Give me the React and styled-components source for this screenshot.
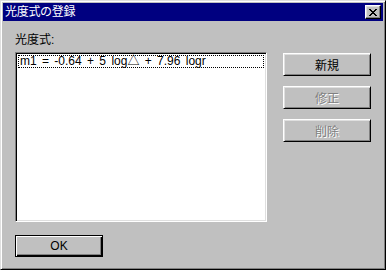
import styled, { createGlobalStyle } from "styled-components";

const GlobalStyle = createGlobalStyle`
  html, body {
    margin: 0;
    padding: 0;
    background: #c0c0c0;
  }
  * {
    box-sizing: border-box;
  }
`;

const jpFont = `"Liberation Sans", "Noto Sans CJK JP", sans-serif`;

const Window = styled.div`
  width: 386px;
  height: 270px;
  background: #c0c0c0;
  border: 1px solid;
  border-color: #dfdfdf #000 #000 #dfdfdf;
  box-shadow: inset 1px 1px 0 #fff, inset -1px -1px 0 #808080;
  padding: 2px;
  display: flex;
  flex-direction: column;
  font-family: ${jpFont};
  font-size: 12px;
`;

const TitleBar = styled.div`
  height: 18px;
  background: #000080;
  color: #fff;
  display: flex;
  align-items: center;
  justify-content: space-between;
  padding: 0 2px 0 2px;
`;

const Title = styled.span`
  font-size: 12px;
  line-height: 14px;
  letter-spacing: -0.3px;
`;

const CloseButton = styled.div`
  width: 16px;
  height: 14px;
  background: #c0c0c0;
  border: 1px solid;
  border-color: #fff #000 #000 #fff;
  box-shadow: inset -1px -1px 0 #808080, inset 1px 1px 0 #dfdfdf;
  display: flex;
  align-items: center;
  justify-content: center;
`;

const Body = styled.div`
  flex: 1;
  display: flex;
  padding: 0 12px 0 12px;
`;

const LeftColumn = styled.div`
  display: flex;
  flex-direction: column;
  width: 252px;
`;

const Label = styled.div`
  margin-top: 12px;
  height: 14px;
  line-height: 14px;
  color: #000;
`;

const ListBox = styled.div`
  margin-top: 5px;
  height: 170px;
  background: #fff;
  border: 1px solid;
  border-color: #808080 #fff #fff #808080;
  box-shadow: inset 1px 1px 0 #000, inset -1px -1px 0 #dfdfdf;
  padding: 2px;
`;

const ListItem = styled.div`
  height: 13px;
  line-height: 11px;
  border: 1px dotted #000;
  padding-left: 1px;
  color: #000;
  white-space: nowrap;
  word-spacing: 2px;
`;

const RightColumn = styled.div`
  margin-left: 16px;
  padding-top: 32px;
  display: flex;
  flex-direction: column;
  gap: 10px;
`;

const Button = styled.button`
  width: 88px;
  height: ${(p) => (p.$default ? "22px" : "23px")};
  padding: 0;
  background: #c0c0c0;
  font-family: ${jpFont};
  font-size: 12px;
  color: ${(p) => (p.disabled ? "#808080" : "#000")};
  text-shadow: ${(p) => (p.disabled ? "1px 1px 0 #fff" : "none")};
  border: 1px solid;
  border-color: ${(p) => (p.$default ? "#000" : "#fff #000 #000 #fff")};
  box-shadow: ${(p) =>
    p.$default
      ? "inset 1px 1px 0 #fff, inset -1px -1px 0 #000, inset -2px -2px 0 #808080"
      : "inset 1px 1px 0 #dfdfdf, inset -1px -1px 0 #808080"};
  display: flex;
  align-items: center;
  justify-content: center;
  cursor: default;
`;

const OkButton = styled(Button)`
  margin-top: 13px;
`;

export default function App() {
  return (
    <>
      <GlobalStyle />
      <Window>
        <TitleBar>
          <Title>光度式の登録</Title>
          <CloseButton>
            <svg width="8" height="7" viewBox="0 0 8 7">
              <path
                d="M0 0h2v1h1v1h2V1h1V0h2v1H7v1H6v1H5v1h1v1h1v1h1v1H6V6H5V5H3v1H2v1H0V6h1V5h1V4h1V3H2V2H1V1H0z"
                fill="#000"
              />
            </svg>
          </CloseButton>
        </TitleBar>
        <Body>
          <LeftColumn>
            <Label>光度式:</Label>
            <ListBox>
              <ListItem>m1 = -0.64 + 5 log△ + 7.96 logr</ListItem>
            </ListBox>
            <OkButton $default>OK</OkButton>
          </LeftColumn>
          <RightColumn>
            <Button>新規</Button>
            <Button disabled>修正</Button>
            <Button disabled>削除</Button>
          </RightColumn>
        </Body>
      </Window>
    </>
  );
}
